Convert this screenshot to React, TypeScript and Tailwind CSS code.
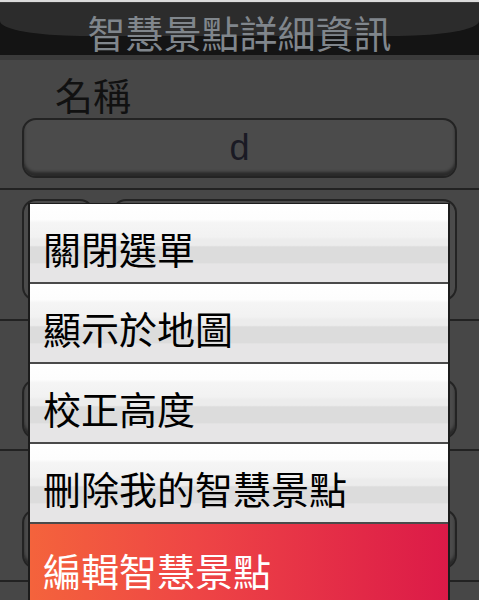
import React from 'react';

// Context menu over the "smart spot" detail screen

const MENU_ITEMS = ['關閉選單', '顯示於地圖', '校正高度', '刪除我的智慧景點'];

function Field({ value }: { value?: string }) {
  return (
    <div className="flex h-[60px] items-center justify-center rounded-[14px] border-2 border-[#232323] bg-[#4b4b4b] shadow-[inset_0_-4px_3px_rgba(0,0,0,0.45)]">
      <span className="font-['Liberation_Sans',sans-serif] text-[36px] leading-none text-[#1a1a24]">
        {value}
      </span>
    </div>
  );
}

function Row({ label, value, h }: { label?: string; value?: string; h: string }) {
  return (
    <div className={`${h} flex flex-col px-[22px]`}>
      <div className="h-[58px] pl-[33px] pt-[15px] text-[38px] leading-[38px] text-[#111]">{label}</div>
      <Field value={value} />
    </div>
  );
}

function Separator() {
  return <div className="h-[2px] bg-[#222]" />;
}

export default function App() {
  return (
    <div className="relative h-[600px] w-[479px] overflow-hidden bg-[#474747] font-['Noto_Sans_CJK_TC',sans-serif]">
      {/* status strip */}
      <div className="h-[2px] bg-[#dcdcdc]" />
      <div className="h-px bg-[#3c3c3c]" />

      {/* Header */}
      <div className="relative flex h-[52px] items-center justify-center bg-[#141414] pt-[6px]">
        <div className="absolute inset-x-0 top-0 h-[33px] rounded-br-[80px_15px] rounded-bl-[80px_15px] bg-[#2c2c2c]" />
        <h1 className="relative text-[38px] leading-none text-[#80868c]">智慧景點詳細資訊</h1>
      </div>
      <div className="h-[5px] bg-[#3a3a3a]" />

      {/* Detail rows (lower ones are hidden under the menu) */}
      <Row label="名稱" value="d" h="h-[128px]" />
      <Separator />
      <div className="flex h-[129px] gap-[18px] px-[22px] pt-[9px]">
        <div className="h-[102px] w-[72px] rounded-[14px] border-2 border-[#232323] bg-[#4b4b4b]" />
        <div className="h-[102px] flex-1 rounded-[14px] border-2 border-[#232323] bg-[#4b4b4b]" />
      </div>
      <Separator />
      <Row h="h-[128px]" />
      <Separator />
      <Row h="h-[129px]" />
      <Separator />

      {/* Menu */}
      <div className="absolute left-[28px] top-[203px] w-[422px] border-x-2 border-t border-[#1c1c1c]">
        {MENU_ITEMS.map((item) => (
          <div
            key={item}
            className="flex h-[80px] items-center border-b-2 border-[#4a4a4a] bg-[linear-gradient(to_bottom,#ffffff_0%,#fdfdfd_20%,#f5f5f5_24%,#f2f2f2_42%,#ececec_46%,#ececec_53%,#dcdcdc_55%,#dcdcdc_75%,#e6e5e6_77%,#e6e5e6_100%)] pl-[13px] pt-[10px]"
          >
            <span className="text-[38px] leading-none text-black">{item}</span>
          </div>
        ))}
        <div className="flex h-[80px] items-center bg-[linear-gradient(to_right,#f4633c,#ee4545_40%,#dc1a48)] pl-[13px] pt-[12px]">
          <span className="text-[38px] leading-none text-white">編輯智慧景點</span>
        </div>
      </div>
    </div>
  );
}
